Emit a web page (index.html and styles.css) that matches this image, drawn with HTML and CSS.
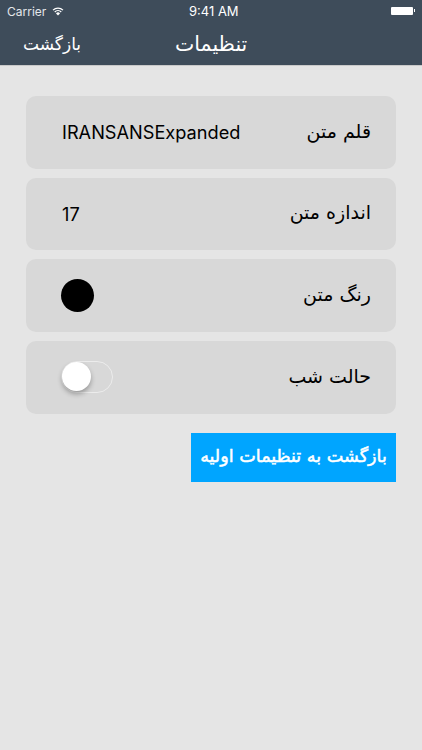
FILE: index.html
```html
<!DOCTYPE html>
<html lang="fa">
  <head>
    <meta charset="UTF-8" />
    <meta name="viewport" content="width=device-width, initial-scale=1.0" />
    <title>تنظیمات</title>
    <link rel="stylesheet" href="styles.css">
  </head>
  <body>
    <header class="topbar">
      <div class="status">
        <div class="status-left">
          <span>Carrier</span>
          <svg class="wifi" width="12" height="9" viewBox="0 0 14 10">
            <path d="M7 9.8 4.7 7.2a3.2 3.2 0 0 1 4.6 0z" fill="#fff"/>
            <path d="M3.2 5.6a5.4 5.4 0 0 1 7.6 0M1.2 3.4a8.2 8.2 0 0 1 11.6 0" fill="none" stroke="#fff" stroke-width="1.5"/>
          </svg>
        </div>
        <span class="clock">9:41 AM</span>
        <div class="battery"></div>
      </div>
      <nav class="nav">
        <a class="nav-back" href="#">بازگشت</a>
        <h1 class="nav-title">تنظیمات</h1>
      </nav>
    </header>

    <main class="settings">
      <div class="row">
        <span class="row-label">قلم متن</span>
        <span class="row-value">IRANSANSExpanded</span>
      </div>
      <div class="row">
        <span class="row-label">اندازه متن</span>
        <span class="row-value">17</span>
      </div>
      <div class="row">
        <span class="row-label">رنگ متن</span>
        <span class="swatch"></span>
      </div>
      <div class="row">
        <span class="row-label">حالت شب</span>
        <span class="toggle"><span class="knob"></span></span>
      </div>
      <button class="button">بازگشت به تنظیمات اولیه</button>
    </main>
  </body>
</html>
```

FILE: styles.css
```css
body {
  margin: 0;
  height: 750px;
  overflow: hidden;
  background: #e5e5e5;
  font-family: "DejaVu Sans", sans-serif;
  color: #000;
}
.topbar {
  height: 65px;
  background: #3e4c5a;
  border-bottom: 1px solid #c9c9c9;
  color: #fff;
}
.status {
  height: 22px;
  padding: 0 9px 0 7px;
  display: flex;
  align-items: center;
  justify-content: space-between;
  position: relative;
  font-family: Inter, sans-serif;
  font-size: 12px;
}
.status-left {
  display: flex;
  align-items: center;
  gap: 6px;
  color: #e4e7ea;
}
.clock {
  position: absolute;
  left: 189px;
  font-size: 13px;
}
.battery {
  width: 22px;
  height: 8px;
  background: #fff;
  border-radius: 1px;
  position: relative;
}
.battery::after {
  content: "";
  position: absolute;
  left: 23px;
  top: 2px;
  width: 1px;
  height: 3px;
  background: #fff;
}
.nav {
  height: 43px;
  display: flex;
  align-items: center;
  position: relative;
}
.nav-back {
  margin-left: 23px;
  color: #fff;
  font-size: 17px;
  text-decoration: none;
}
.nav-title {
  position: absolute;
  left: 175px;
  margin: 0;
  font-size: 20.5px;
  font-weight: 400;
}
.settings {
  padding: 30px 26px 0;
  display: flex;
  flex-direction: column;
  gap: 9px;
}
.row {
  height: 72.67px;
  padding: 0 25px 0 35px;
  background: #d8d8d8;
  border-radius: 10px;
  display: flex;
  flex-direction: row-reverse;
  align-items: center;
  justify-content: space-between;
}
.row-label {
  font-size: 19px;
  margin-bottom: 3px;
}
.row-value {
  font-family: Inter, sans-serif;
  font-size: 18.2px;
  margin-left: 1px;
}
.swatch {
  width: 33px;
  height: 33px;
  background: #000;
  border-radius: 50%;
}
.toggle {
  width: 50px;
  height: 30px;
  border: 1px solid #ececec;
  border-radius: 16px;
  position: relative;
}
.knob {
  position: absolute;
  left: 0;
  top: 0;
  width: 29px;
  height: 29px;
  background: #fff;
  border-radius: 50%;
  box-shadow: 0 3px 5px rgba(0, 0, 0, 0.3);
}
.button {
  align-self: flex-end;
  width: 205px;
  height: 49px;
  margin-top: 10px;
  padding: 0 0 3px;
  border: none;
  background: #00a5ff;
  color: #fff;
  font-family: "DejaVu Sans", sans-serif;
  font-size: 17.6px;
  font-weight: 400;
  -webkit-text-stroke: 0.5px #fff;
}
```
